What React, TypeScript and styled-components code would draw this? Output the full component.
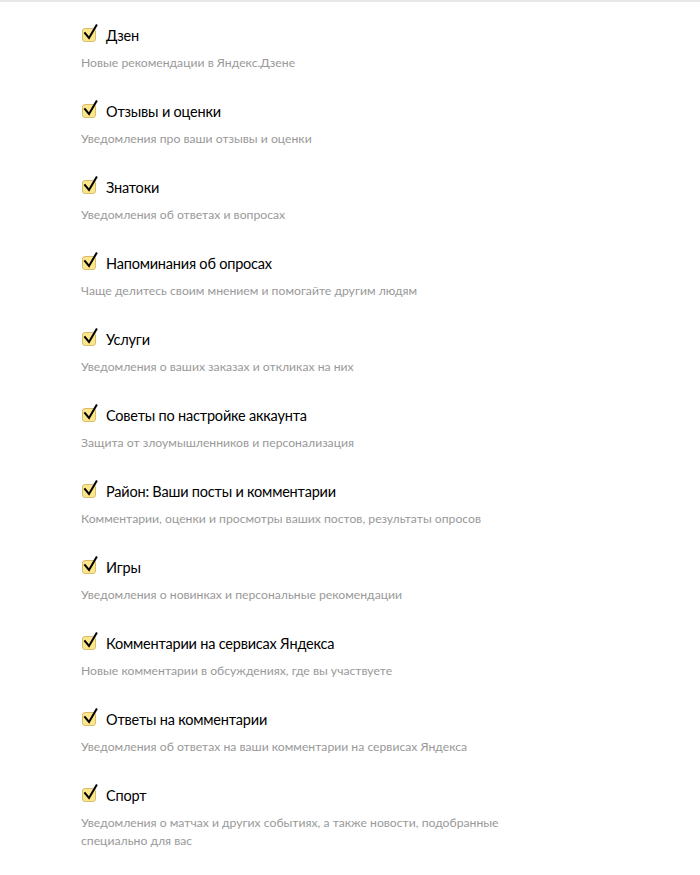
import React from "react";
import styled, { createGlobalStyle } from "styled-components";

const Global = createGlobalStyle`
  html, body { margin: 0; padding: 0; background: #fff; }
  body { font-family: Lato, "Liberation Sans", Arial, sans-serif; }
`;

const Page = styled.div`
  border-top: 2px solid #e7e7e7;
  padding: 24px 0 0 81px;
`;

const List = styled.ul`
  list-style: none;
  margin: 0;
  padding: 0;
`;

const Item = styled.li`
  padding-bottom: 30px;
`;

const TitleRow = styled.label`
  display: flex;
  align-items: center;
  gap: 8px;
  height: 20px;
`;

const Title = styled.span`
  font-size: 14.5px;
  line-height: 20px;
  letter-spacing: -0.2px;
  color: #000;
  margin-top: -1px;
`;

const Desc = styled.div`
  margin-top: 8px;
  font-size: 12.2px;
  line-height: 18px;
  color: #999;
  max-width: 425px;
`;

const Box = styled.svg`
  flex: none;
`;

const Check = () => (
  <Box width="17" height="24" viewBox="0 0 17 24">
    <rect x="1.5" y="4.5" width="13" height="13" rx="2.5" fill="#fce68c" stroke="#d6bd72" />
    <path d="M4 9.2 L8 14 L15.4 1.4" fill="none" stroke="#000" strokeWidth="2" strokeLinecap="square" />
  </Box>
);

const items: [string, string][] = [
  ["Дзен", "Новые рекомендации в Яндекс.Дзене"],
  ["Отзывы и оценки", "Уведомления про ваши отзывы и оценки"],
  ["Знатоки", "Уведомления об ответах и вопросах"],
  ["Напоминания об опросах", "Чаще делитесь своим мнением и помогайте другим людям"],
  ["Услуги", "Уведомления о ваших заказах и откликах на них"],
  ["Советы по настройке аккаунта", "Защита от злоумышленников и персонализация"],
  ["Район: Ваши посты и комментарии", "Комментарии, оценки и просмотры ваших постов, результаты опросов"],
  ["Игры", "Уведомления о новинках и персональные рекомендации"],
  ["Комментарии на сервисах Яндекса", "Новые комментарии в обсуждениях, где вы участвуете"],
  ["Ответы на комментарии", "Уведомления об ответах на ваши комментарии на сервисах Яндекса"],
  ["Спорт", "Уведомления о матчах и других событиях, а также новости, подобранные специально для вас"],
];

export default function App() {
  return (
    <>
      <Global />
      <Page>
        <List>
          {items.map(([t, d]) => (
            <Item key={t}>
              <TitleRow>
                <Check />
                <Title>{t}</Title>
              </TitleRow>
              <Desc>{d}</Desc>
            </Item>
          ))}
        </List>
      </Page>
    </>
  );
}
